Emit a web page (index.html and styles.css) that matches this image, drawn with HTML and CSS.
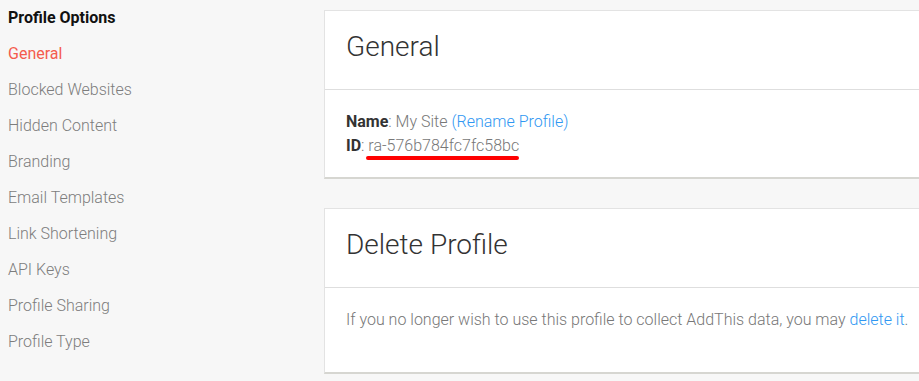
FILE: index.html
```html
<!DOCTYPE html>
<html lang="en">
<head>
  <meta charset="UTF-8">
  <meta name="viewport" content="width=device-width, initial-scale=1.0">
  <title>Profile Options</title>
  <link rel="stylesheet" href="styles.css">
</head>
<body>
  <div class="layout">
    <nav class="sidebar">
      <h3>Profile Options</h3>
      <ul>
        <li class="active">General</li>
        <li>Blocked Websites</li>
        <li>Hidden Content</li>
        <li>Branding</li>
        <li>Email Templates</li>
        <li>Link Shortening</li>
        <li>API Keys</li>
        <li>Profile Sharing</li>
        <li>Profile Type</li>
      </ul>
    </nav>

    <main class="content">
      <section class="card">
        <div class="card-header">
          <h2>General</h2>
        </div>
        <div class="card-body">
          <p><strong>Name</strong>: My Site <a href="#">(Rename Profile)</a></p>
          <p><strong>ID</strong>: <span class="profile-id">ra-576b784fc7fc58bc</span></p>
        </div>
      </section>

      <section class="card">
        <div class="card-header">
          <h2>Delete Profile</h2>
        </div>
        <div class="card-body card-body-tall">
          <p>If you no longer wish to use this profile to collect AddThis data, you may <a href="#">delete it</a>.</p>
        </div>
      </section>
    </main>
  </div>
</body>
</html>
```

FILE: styles.css
```css
body {
  font-family: 'Roboto', sans-serif;
  margin: 0;
  padding: 0;
  background-color: #f7f7f7;
  color: #777;
  overflow: hidden;
}

.layout {
  display: flex;
}

.sidebar {
  width: 316px;
  padding-left: 8px;
  flex-shrink: 0;
}

.sidebar h3 {
  font-size: 16px;
  font-weight: 700;
  color: #111;
  line-height: 36px;
  margin: 0;
}

.sidebar ul {
  list-style: none;
  margin: 0;
  padding: 0;
}

.sidebar li {
  font-size: 16px;
  font-weight: 300;
  line-height: 36px;
  color: #7d7d7d;
}

.sidebar li.active {
  color: #f45c4e;
  font-weight: 400;
}

.content {
  flex: 1;
  padding-top: 10px;
  margin-right: -20px;
}

.card {
  background: #ffffff;
  border: 1px solid #e3e3e3;
  border-bottom: 2px solid #d6d6d1;
  margin-bottom: 29px;
}

.card-header {
  padding: 18px 21px 24px;
  border-bottom: 1px solid #dedede;
}

.card-header h2 {
  font-size: 28px;
  font-weight: 300;
  line-height: 36px;
  color: #333;
  margin: 0;
}

.card-body {
  padding: 20px 21px 19px;
  font-size: 16px;
  font-weight: 300;
  line-height: 24px;
}

.card-body-tall {
  padding-top: 20px;
  padding-bottom: 40px;
}

.card-body p {
  margin: 0;
}

.card-body strong {
  color: #333;
  font-weight: 700;
}

.card-body a {
  color: #2f97f2;
  text-decoration: none;
}

.profile-id {
  position: relative;
}

.profile-id::after {
  content: '';
  position: absolute;
  left: -2px;
  right: 0;
  bottom: -5px;
  height: 4px;
  border-radius: 2px;
  background: #ff0000;
}
```
